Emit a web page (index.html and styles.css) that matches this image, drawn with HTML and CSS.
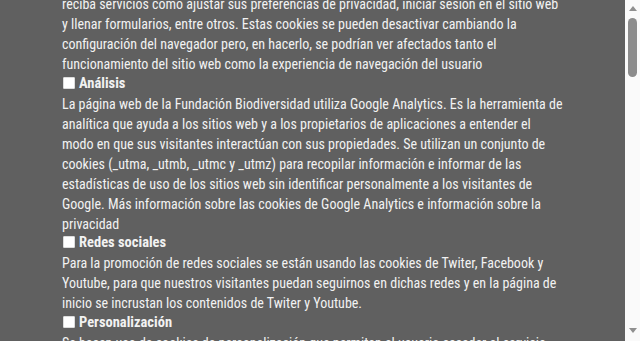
FILE: index.html
```html
<!DOCTYPE html>
<html>

<head>
	<meta http-equiv="Content-Type" content="text/html; charset=utf-8"/>
	<title>Configuración de cookies</title>
	<link rel="stylesheet" href="styles.css">
</head>

<body>
<div class="panel">
	<div class="cookies">
		<p>reciba servicios como ajustar sus preferencias de privacidad, iniciar sesión en el sitio web y llenar formularios, entre otros. Estas cookies se pueden desactivar cambiando la configuración del navegador pero, en hacerlo, se podrían ver afectados tanto el funcionamiento del sitio web como la experiencia de navegación del usuario</p>

		<label class="tipo"><input type="checkbox" name="analisis"/> Análisis</label>
		<p>La página web de la Fundación Biodiversidad utiliza Google Analytics. Es la herramienta de analítica que ayuda a los sitios web y a los propietarios de aplicaciones a entender el modo en que sus visitantes interactúan con sus propiedades. Se utilizan un conjunto de cookies (_utma, _utmb, _utmc y _utmz) para recopilar información e informar de las estadísticas de uso de los sitios web sin identificar personalmente a los visitantes de Google. Más información sobre las cookies de Google Analytics e información sobre la privacidad</p>

		<label class="tipo"><input type="checkbox" name="redes"/> Redes sociales</label>
		<p>Para la promoción de redes sociales se están usando las cookies de Twiter, Facebook y Youtube, para que nuestros visitantes puedan seguirnos en dichas redes y en la página de inicio se incrustan los contenidos de Twiter y Youtube.</p>

		<label class="tipo"><input type="checkbox" name="personalizacion"/> Personalización</label>
		<p>Se hacen uso de cookies de personalización que permiten al usuario acceder al servicio con algunas características de carácter general predefinidas en función de una serie de criterios en el terminal del usuario.</p>
	</div>
</div>
<div class="scrollbar">
	<span class="arrow up"></span>
	<span class="thumb"></span>
	<span class="arrow down"></span>
</div>
</body>

</html>
```

FILE: styles.css
```css
html {
	font-size: 14px;
	font-family: Roboto, "Liberation Sans", sans-serif;
	font-stretch: 75%;
}

body {
	margin: 0;
	height: 100vh;
	overflow: hidden;
	display: flex;
	background-color: #fafafa;
}

.panel {
	flex: 1;
	background-color: #606060;
	color: #f2f2f2;
}

.cookies {
	width: 502px;
	padding: 0 0 0 62px;
	margin-top: -6px;
	line-height: 20px;
}

.cookies p {
	margin: 0;
}

.tipo {
	display: flex;
	align-items: center;
	gap: 3px;
	height: 19.5px;
	font-size: 14.5px;
	font-weight: bold;
}

.tipo input {
	appearance: none;
	width: 12px;
	height: 12px;
	margin: 0 1px 2px 1px;
	background-color: #fff;
	border: 1px solid #dcdcdc;
	border-radius: 1px;
}

/* barra de desplazamiento */
.scrollbar {
	width: 15px;
	display: flex;
	flex-direction: column;
	align-items: center;
	padding: 6px 0 8px;
	box-sizing: border-box;
}

.arrow {
	width: 0;
	height: 0;
	border-left: 4.5px solid transparent;
	border-right: 4.5px solid transparent;
}

.arrow.up {
	border-bottom: 5px solid #8f8f8f;
}

.arrow.down {
	margin-top: auto;
	border-top: 5px solid #8f8f8f;
}

.thumb {
	width: 9px;
	height: 59px;
	margin-top: 7px;
	border-radius: 5px;
	background-color: #8c8c8c;
}
```
